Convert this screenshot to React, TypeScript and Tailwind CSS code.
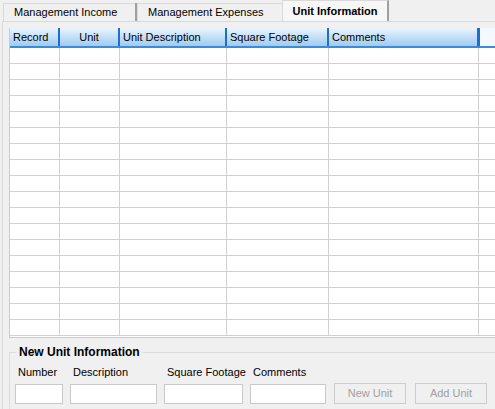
const COLUMNS = [
  { label: "Record", width: 50, align: "left" },
  { label: "Unit", width: 60, align: "center" },
  { label: "Unit Description", width: 107, align: "left" },
  { label: "Square Footage", width: 102, align: "left" },
  { label: "Comments", width: 150, align: "left" },
  { label: "", width: 40, align: "left" },
];

const ROWS = Array.from({ length: 18 }, (_, i) => i);

function Tab({ label, width, active }: { label: string; width: number; active?: boolean }) {
  if (active) {
    return (
      <div
        className="h-[21px] flex items-center justify-center border-l border-t border-r-2 border-[#d9d9d9] border-r-[#a0a0a0] bg-[#f7f7f7] font-bold text-black"
        style={{ width }}
      >
        {label}
      </div>
    );
  }
  return (
    <div
      className="h-[18px] flex items-center pl-[10px] border-t border-l border-[#d9d9d9] bg-[#f0f0f0] text-black"
      style={{ width }}
    >
      {label}
    </div>
  );
}

function Field({ label, width }: { label: string; width: number }) {
  return (
    <div className="flex flex-col shrink-0" style={{ width }}>
      <span className="pl-[3px] h-[19px] leading-[14px] whitespace-nowrap">{label}</span>
      <div className="h-[20px] bg-white border border-[#c9c9c9]" />
    </div>
  );
}

export default function App() {
  return (
    <div
      className="w-[495px] h-[409px] bg-[#f0f0f0] overflow-hidden text-[11px] text-black"
      style={{ fontFamily: '"Liberation Sans", Arial, sans-serif' }}
    >
      {/* tab strip */}
      <div className="flex items-end h-[21px] pl-[3px]">
        <Tab label="Management Income" width={132} />
        <div className="w-[2px] h-[18px] bg-[#a0a0a0]" />
        <Tab label="Management Expenses" width={145} />
        <Tab label="Unit Information" width={107} active />
      </div>

      {/* tab page */}
      <div className="h-[388px] ml-[2px] border-l border-t border-[#dadada] pt-[6px] pl-[6px]">
        {/* grid */}
        <div className="w-[520px] h-[310px] bg-white border-l border-b border-[#a8d8e0] flex flex-col">
          <div className="flex h-[20px] border-b-2 border-[#3d8ad6] bg-gradient-to-b from-[#eaf4fd] to-[#9fcbf2]">
            {COLUMNS.map((c, i) => (
              <div
                key={i}
                className={`shrink-0 flex items-center px-[3px] whitespace-nowrap border-r-2 border-[#1c6fd1] ${
                  c.align === "center" ? "justify-center" : ""
                } ${i === COLUMNS.length - 1 ? "bg-[#f4f9ff] border-l border-[#1c6fd1]" : ""}`}
                style={{ width: c.width }}
              >
                {c.label}
              </div>
            ))}
          </div>
          {ROWS.map((r) => (
            <div key={r} className="flex h-[16px] border-b border-[#d0d0d0] shrink-0">
              {COLUMNS.map((c, i) => (
                <div
                  key={i}
                  className="shrink-0 border-r border-[#d0d0d0]"
                  style={{ width: c.width }}
                />
              ))}
            </div>
          ))}
        </div>

        {/* group box */}
        <div className="relative mt-[14px] w-[520px] h-[80px] border-l border-t border-[#dcdcdc]">
          <div className="absolute -top-[8px] left-[6px] px-[3px] bg-[#f0f0f0] font-bold text-[12px] leading-[14px]">
            New Unit Information
          </div>
          <div className="flex pt-[12px] pl-[5px] gap-[7px]">
            <Field label="Number" width={48} />
            <Field label="Description" width={87} />
            <Field label="Square Footage" width={79} />
            <Field label="Comments" width={76} />
            <div className="flex gap-[9px] pt-[18px] pl-[1px]">
              <button className="w-[72px] h-[21px] border border-[#cccccc] bg-[#f0f0f0] text-[#a0a0a0]">
                New Unit
              </button>
              <button className="w-[72px] h-[21px] border border-[#cccccc] bg-[#f0f0f0] text-[#a0a0a0]">
                Add Unit
              </button>
            </div>
          </div>
        </div>
      </div>
    </div>
  );
}
